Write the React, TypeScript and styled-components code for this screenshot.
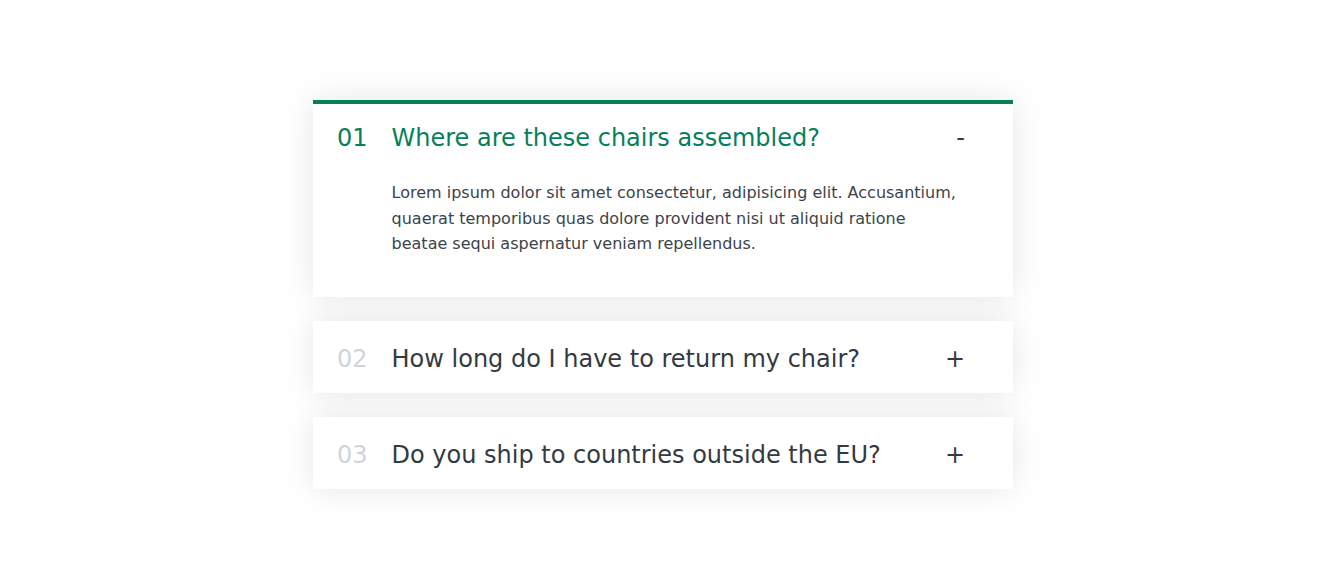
import React, { ReactElement, useState } from "react";
import styled, { createGlobalStyle } from "styled-components";

const GlobalStyle = createGlobalStyle`
  * {
    margin: 0;
    padding: 0;
    box-sizing: border-box;
  }

  body {
    font-family: "DejaVu Sans", sans-serif;
    color: #343a40;
    background: #fff;
  }
`;

const Accordion = styled.div`
  width: 700px;
  margin: 100px auto;
  display: flex;
  flex-direction: column;
  gap: 24px;
`;

const Item = styled.div<{ $open: boolean }>`
  box-shadow: 0 0 32px rgba(0, 0, 0, 0.1);
  padding: 20px 48px 20px 24px;
  display: grid;
  grid-template-columns: auto 1fr auto;
  column-gap: 24px;
  row-gap: 28px;
  align-items: center;
  cursor: pointer;
  border-top: 4px solid ${({ $open }) => ($open ? "#087f5b" : "#fff")};
  background: #fff;
`;

const Number = styled.p<{ $open: boolean }>`
  font-size: 24px;
  font-weight: 500;
  color: ${({ $open }) => ($open ? "#087f5b" : "#ced4da")};
`;

const Title = styled.p<{ $open: boolean }>`
  font-size: 24px;
  font-weight: 500;
  color: ${({ $open }) => ($open ? "#087f5b" : "#343a40")};
`;

const Icon = styled.p`
  font-size: 24px;
  font-weight: 500;
  color: #343a40;
`;

const ContentBox = styled.div`
  grid-column: 2 / -1;
  padding-bottom: 20px;
  font-size: 16px;
  line-height: 1.6;
  color: #3d434a;
`;

interface Faq {
  title: string;
  text: string;
}

const faqs: Faq[] = [
  {
    title: "Where are these chairs assembled?",
    text: "Lorem ipsum dolor sit amet consectetur, adipisicing elit. Accusantium, quaerat temporibus quas dolore provident nisi ut aliquid ratione beatae sequi aspernatur veniam repellendus.",
  },
  {
    title: "How long do I have to return my chair?",
    text: "Pariatur recusandae dignissimos fuga voluptas unde optio nesciunt commodi beatae, explicabo natus.",
  },
  {
    title: "Do you ship to countries outside the EU?",
    text: "Excepturi velit laborum, perspiciatis nemo perferendis reiciendis aliquam possimus dolor sed! Dolore laborum ducimus veritatis facere molestias!",
  },
];

export default function App(): ReactElement {
  const [curOpen, setCurOpen] = useState<number | null>(0);

  return (
    <>
      <GlobalStyle />
      <Accordion>
        {faqs.map((faq, i) => {
          const isOpen = curOpen === i;
          return (
            <Item
              key={faq.title}
              $open={isOpen}
              onClick={() => setCurOpen(isOpen ? null : i)}
            >
              <Number $open={isOpen}>{i < 9 ? `0${i + 1}` : i + 1}</Number>
              <Title $open={isOpen}>{faq.title}</Title>
              <Icon>{isOpen ? "-" : "+"}</Icon>
              {isOpen && <ContentBox>{faq.text}</ContentBox>}
            </Item>
          );
        })}
      </Accordion>
    </>
  );
}
